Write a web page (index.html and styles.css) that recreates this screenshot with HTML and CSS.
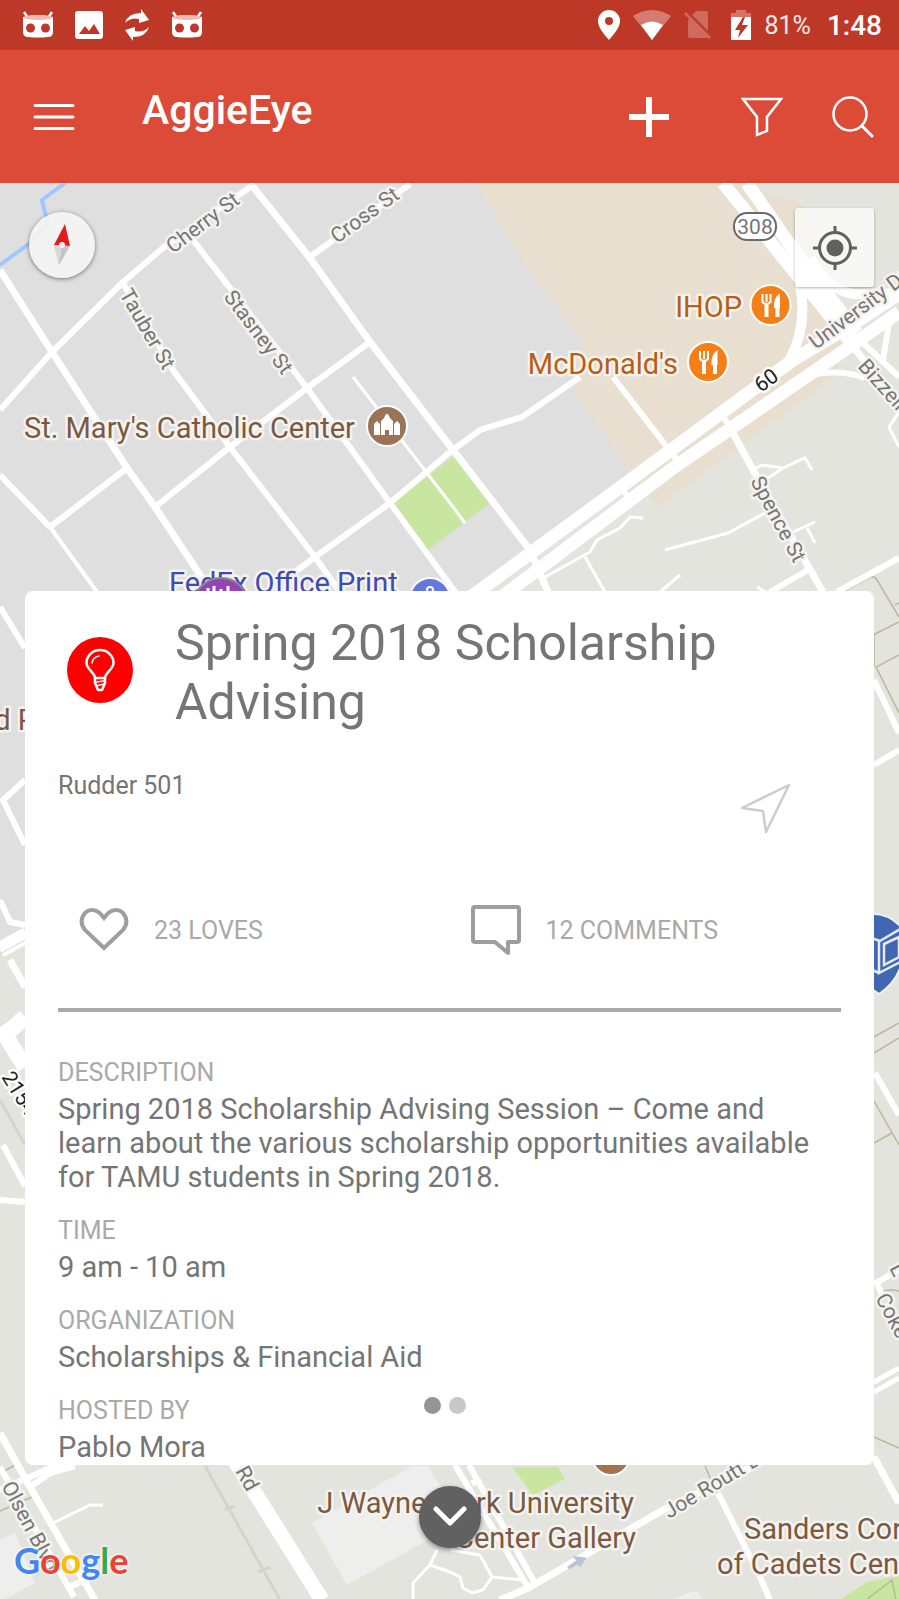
FILE: index.html
```html
<!DOCTYPE html>
<html lang="en">
<head>
  <meta charset="UTF-8" />
  <meta name="viewport" content="width=device-width, initial-scale=1.0"/>
  <title>AggieEye</title>
  <link rel="stylesheet" href="styles.css">
</head>
<body>
  <div class="status-bar">
    <svg width="32" height="30" viewBox="0 0 32 30">
      <path d="M2 2l4 6M30 2l-4 6" stroke="#fff" stroke-width="2.5"/>
      <path d="M1 7q15-4 30 0v15q0 5-5 5q-10 1-20 0q-5 0-5-5z" fill="#fff"/>
      <ellipse cx="16" cy="7.500" rx="14" ry="2.500" fill="#f0b9b2"/>
      <circle cx="8.500" cy="18" r="4.500" fill="#be3827"/>
      <circle cx="23.500" cy="18" r="4.500" fill="#be3827"/>
    </svg>
    <svg width="28" height="28" viewBox="0 0 28 28">
      <rect width="28" height="28" rx="3" fill="#fff"/>
      <path d="M4 23l6-8 4 5 5-7 6 10z" fill="#be3827"/>
    </svg>
    <svg width="26" height="32" viewBox="0 0 26 32">
      <path d="M1 14Q4 4 17 4V0l8 11-10 3v-4Q7 8 1 14z" fill="#fff"/>
      <path d="M25 18Q22 28 9 28v4L1 21l10-3v4q8 2 14-4z" fill="#fff"/>
    </svg>
    <svg width="32" height="30" viewBox="0 0 32 30">
      <path d="M2 2l4 6M30 2l-4 6" stroke="#fff" stroke-width="2.5"/>
      <path d="M1 7q15-4 30 0v15q0 5-5 5q-10 1-20 0q-5 0-5-5z" fill="#fff"/>
      <ellipse cx="16" cy="7.500" rx="14" ry="2.500" fill="#f0b9b2"/>
      <circle cx="8.500" cy="18" r="4.500" fill="#be3827"/>
      <circle cx="23.500" cy="18" r="4.500" fill="#be3827"/>
    </svg>
    <div class="status-right">
      <svg width="22" height="30" viewBox="0 0 22 30">
        <path fill-rule="evenodd" d="M11 0a11 11 0 0 1 11 11c0 7-7 14-11 19C7 25 0 18 0 11A11 11 0 0 1 11 0zm0 7a4 4 0 1 0 0 8 4 4 0 0 0 0-8z" fill="#fff"/>
      </svg>
      <svg width="38" height="30" viewBox="0 0 38 30">
        <path d="M0 6q19-12 38 0L19 30z" fill="#d57b70"/>
        <path d="M8 15q11-7 22 0L19 30z" fill="#fff"/>
      </svg>
      <svg width="28" height="30" viewBox="0 0 28 30">
        <path d="M5 8l7-7h10q2 0 2 2v23q0 2-2 2H6q-2 0-2-2V11z" fill="#cf6a5e"/>
        <path d="M2 1l26 26" stroke="#be3827" stroke-width="3"/>
        <path d="M1 3l25 25" stroke="#cf6a5e" stroke-width="2.500"/>
      </svg>
      <svg class="battery" width="20" height="30" viewBox="0 0 20 30">
        <path d="M0 8V3h5V0h10v3h5v5z" fill="#d57368"/>
        <path d="M0 7h20v23H0z" fill="#fff"/>
        <path d="M12 7L4 20h5l-2 8 10-13h-6l3-8z" fill="#be3827"/>
      </svg>
      <span class="percent">81%</span>
      <span class="clock">1:48</span>
    </div>
  </div>

  <header class="app-bar">
    <button class="icon-btn" aria-label="Menu">
      <svg width="42" height="42" viewBox="0 0 42 42" stroke="#fff" stroke-width="3" stroke-linecap="round">
        <path d="M2 9.500h38M2 21h38M2 32.500h38"/>
      </svg>
    </button>
    <h1>AggieEye</h1>
    <div class="actions">
      <button class="icon-btn" aria-label="Add">
        <svg width="40" height="42" viewBox="0 0 40 42" stroke="#fff" stroke-width="6">
          <path d="M0 21h40M20 1v40"/>
        </svg>
      </button>
      <button class="icon-btn filter" aria-label="Filter">
        <svg width="42" height="42" viewBox="0 0 42 42" fill="none" stroke="#fff" stroke-width="2.500">
          <path d="M2 3h38L26 21v14l-10 4V21z"/>
        </svg>
      </button>
      <button class="icon-btn" aria-label="Search">
        <svg width="42" height="42" viewBox="0 0 42 42" fill="none" stroke="#fff" stroke-width="2.500" stroke-linecap="round">
          <circle cx="18" cy="18" r="16.500"/>
          <path d="M30 30l10 10" stroke-width="3"/>
        </svg>
      </button>
    </div>
  </header>

  <main class="map-area">
    <svg class="map" viewBox="0 183 899 1416" preserveAspectRatio="xMidYMin slice">
      <rect y="183" width="899" height="1417" fill="#e3e4de"/>
      <path d="M0 183h740l120 147L470 600 30 925 0 950z" fill="#dfdfdf"/>
      <path d="M475 183h260l65 20 50 127-15 47-178 131-25-35-62-86 13-44-61-83z" fill="#e8dfd0"/>
      <path d="M394 503l61-48 35 48-62 47z" fill="#c8e6a0"/>
      <path d="M512 1467h46l7 12-32 16zM840 1600l27-18 32-6v24z" fill="#c8e6a0"/>
      <path d="M312 1523l100-57h16l34 55-115 64zM0 1540l15-8 20 51-32 17H0zM670 1600l27-10 6 10z" fill="#eeeeed"/>
      <path d="M65 183L42 200l6 25-18 18-30 22" fill="none" stroke="#9fc8ff" stroke-width="4"/>

      <!-- footpaths -->
      <g fill="none" stroke="#bbb798" stroke-width="1.500">
        <path d="M843 592l27-15q5-1 7 3l22 37M899 622l-30 15M895 605l4-2M899 655l-23 12 23 46M874 633V667"/>
        <path d="M874 1037l25-14M874 1053l25-15M874 1101l25 44M874 1143l18-10M883 1291q8-2 16 0M874 1437l25 11"/>
        <path d="M705 1466l13 30M0 1511l32-14M3 1472l12-7M866 1600l26-20 4 20"/>
      </g>
      <path d="M205 1466l75 134M225 1510l10-4M258 1572l12-5M0 1100l25 45" fill="none" stroke="#d3d4cf" stroke-width="3"/>

      <!-- minor roads -->
      <g fill="none" stroke="#fff" stroke-width="3">
        <path d="M353 377l97 126 15 20M753 470l9-5 21 3 22-10 7 12M768 478l15-10M765 513l-37 20-63 17"/>
        <path d="M793 532l22-10M807 528l8 15M643 518l-13-1-10 11-23 12-7 12-47 26M585 557l20 35M680 575l-20 17"/>
        <path d="M53 1523l37-18h13M437 1550l-7 15-17 18v17M430 1565l20 7 10 5 3 11 9 5 11-3 9-13-12-22M492 1577l30 3M480 1555l-30-5"/>
        <path d="M899 412l-10 15 10 20M757 587l10 6"/>
      </g>
      <g fill="none" stroke="#fff" stroke-width="6">
        <path d="M253 185l-90 63-41 35-70 69-52 58M310 257l100-73M123 283l50 87 57 77 85 110 27 38"/>
        <path d="M193 240l114 148 83 115 66 90M370 342l-63 46-77 59-75 60M127 468l-77 59"/>
        <path d="M0 475l50 52M580 377l-58 40-42 13-30 22-60 51-75 54-20 15"/>
        <path d="M50 527l47 65" stroke-width="4"/>
        <path d="M613 377l64 83M723 417l12 16M623 490l8 11M808 570l-38 22M899 558l-62 34"/>
        <path d="M860 340l39 37M890 317l-7 43M810 375q30-6 55 3"/>
        <path d="M0 607l25 41M25 780L3 800l22 45M0 900l10 22 15 3M3 1145l22 41M0 1200l25 2"/>
        <path d="M874 680l25 53M899 750l-25 15M875 1073l24 42M874 1284l25-14M876 1281l6 14"/>
        <path d="M874 1382l25-14M874 1392l25-14" stroke-width="5"/>
        <path d="M0 1467l74 130M0 1490l50-22 25-5M30 1487l20-14 25-7M70 1587l16-8M455 1465l74 124M469 1465l67 120M472 1484l8-6"/>
        <path d="M718 1493l42 84 10 23"/>
      </g>
      <g fill="none" stroke="#fff" stroke-width="7">
        <path d="M250 183l60 75 60 84 83 108 77 100 18 42M0 270l52 82 75 116 28 39 55 83"/>
        <path d="M733 433l20 37 70 122M850 343l49 60M10 960l15 27M0 1433l30 54 65 113M874 1457l25 46"/>
        <path d="M760 1463l-97 47-135 78-28 12"/>
      </g>
      <g fill="none" stroke="#fff">
        <path d="M470 597l13-9 184-135 126-93 57-34 49-32M494 602l13-9 170-128 56-38 122-84 44-31" stroke-width="13"/>
        <path d="M723 183l127 158M747 183l43 62 67 88" stroke-width="13"/>
        <path d="M810 258q20 34 45 36l44-1M800 285q8 40-10 74" stroke-width="10"/>
        <path d="M0 950l27-15M0 1027l25 40M5 1035l20-18" stroke-width="16"/>
        <path d="M235 1461l87 139" stroke-width="15"/>
        <path d="M0 954l25-14" stroke="#d3d4cf" stroke-width="1"/>
      </g>
      <path d="M568 1568l10-7-2-3 8 1-4 6-2-2z" stroke="#b9c3d3" stroke-width="3" fill="#b9c3d3"/>

      <!-- street names -->
      <g class="street">
        <text transform="translate(173 254) rotate(-37)">Cherry St</text>
        <text transform="translate(337 244) rotate(-36)">Cross St</text>
        <text transform="translate(119 294) rotate(60)">Tauber St</text>
        <text transform="translate(223 297) rotate(53)">Stasney St</text>
        <text transform="translate(750 481) rotate(62)">Spence St</text>
        <text transform="translate(857 367) rotate(48)">Bizzell St</text>
        <text transform="translate(816 350) rotate(-37)">University Dr</text>
        <text transform="translate(669 1519) rotate(-31)">Joe Routt Blvd</text>
        <text transform="translate(1 1486) rotate(62)">Olsen Blvd</text>
        <text transform="translate(235 1471) rotate(61)">Rd</text>
        <text transform="translate(875 1298) rotate(62)">Coke St</text>
        <text transform="translate(889 1268) rotate(62)">L</text>
        <text class="route" transform="translate(761 393) rotate(-37)">60</text>
        <text class="route" transform="translate(1 1077) rotate(58)">2154</text>
      </g>
      <rect x="734" y="213" width="42" height="27" rx="13" fill="#fff" stroke="#6b6b6b" stroke-width="2"/>
      <text class="shield" x="755" y="234" text-anchor="middle">308</text>

      <!-- places -->
      <g class="place">
        <text x="24" y="438">St. Mary's Catholic Center</text>
        <text x="36" y="730" text-anchor="end">Broad P</text>
        <text x="634" y="1513" text-anchor="end">J Wayne Stark University</text>
        <text x="636" y="1548" text-anchor="end">Center Gallery</text>
        <text x="744" y="1539">Sanders Corps</text>
        <text x="717" y="1574">of Cadets Center</text>
        <text class="food" x="742" y="317" text-anchor="end">IHOP</text>
        <text class="food" x="678" y="374" text-anchor="end">McDonald's</text>
        <text class="shop" x="169" y="593">FedEx Office Print</text>
      </g>
      <g stroke="#fff" stroke-width="2">
        <circle cx="387" cy="426" r="20" fill="#9b7357"/>
        <circle cx="611" cy="1456" r="19" fill="#a5714f"/>
        <circle cx="770.500" cy="305" r="20" fill="#f57f17"/>
        <circle cx="708" cy="362" r="20" fill="#f57f17"/>
        <circle cx="430" cy="598" r="20" fill="#6478e0"/>
        <circle cx="221" cy="606" r="28" fill="#9444b5" stroke="#888"/>
      </g>
      <path d="M374 435V424l3-3 3 3v11zM394 435V424l3-3 3 3v11zM381 435v-14l3-3 2-4h2l2 4 3 3v14h-4v-5h-4v5z" fill="#fff"/>
      <g id="fork" fill="none" stroke="#fff">
        <path d="M762.500 294v8q4 4 8 0v-8M766.500 294v8" stroke-width="2"/>
        <path d="M766.500 303v14M777.500 303v14" stroke-width="4"/>
        <path d="M780 293q-7 5-6 15h6z" fill="#fff" stroke="none"/>
      </g>
      <use href="#fork" x="-62.500" y="57"/>
      <path d="M208 588v6M214 586v8M221 589v5M228 586v8" stroke="#fff" stroke-width="3"/>
      <circle cx="430" cy="590" r="3" fill="none" stroke="#fff" stroke-width="2"/>
      <path d="M868 914q20-2 34 14v34q-5 20-23 32l-11-8z" fill="#4267b2" stroke="#eef1f8" stroke-width="2"/>
      <path d="M868 937l12 4 22-13M879 941v32l23-12M868 968l11 5M884 944l15-7v20l-15 8z" fill="none" stroke="#e4ebf6" stroke-width="2.500"/>
    </svg>

    <div class="map-controls">
      <button class="compass" aria-label="Compass">
        <svg width="66" height="66" viewBox="0 0 66 66">
          <path d="M36 12l5 22-16-1z" fill="#e21b1b"/>
          <path d="M25 33l5 20 11-19z" fill="#c4c4c4"/>
          <path d="M25 33l5 20 3-20z" fill="#d8d8d8"/>
          <circle cx="33" cy="33" r="3" fill="#f2f2f2"/>
        </svg>
      </button>
      <button class="locate" aria-label="My location">
        <svg width="44" height="44" viewBox="0 0 44 44" fill="none" stroke="#616161" stroke-width="3">
          <circle cx="22" cy="22" r="15.500"/>
          <circle cx="22" cy="22" r="8.500" fill="#616161" stroke="none"/>
          <path d="M22 0v7M22 37v7M0 22h7M37 22h7"/>
        </svg>
      </button>
    </div>

    <article class="card">
      <div class="card-header">
        <svg class="event-icon" width="66" height="66" viewBox="0 0 66 66">
          <circle cx="33" cy="33" r="33" fill="#f00"/>
          <g fill="none" stroke="#fff" stroke-width="2.500" stroke-linecap="round" stroke-linejoin="round">
            <path d="M28 41c0-5-8.500-9-8.500-15a13.500 13 0 0 1 27 0c0 6-8.500 10-8.500 15z"/>
            <path d="M28 41v5l3 7h4l3-7v-5"/>
            <path d="M29 45l8-1M29 49l8-2M25 26q1-6 7-7" stroke-width="1.500"/>
          </g>
        </svg>
        <h2>Spring 2018 Scholarship Advising</h2>
      </div>

      <div class="location">
        <p>Rudder 501</p>
        <button class="icon-btn navigate" aria-label="Navigate">
          <svg width="50" height="50" viewBox="0 0 50 50" fill="none" stroke="#ccc" stroke-width="2.500" stroke-linejoin="round">
            <path d="M48 2L1 25l21 3 3 21z"/>
          </svg>
        </button>
      </div>

      <div class="stats">
        <button class="stat">
          <svg width="50" height="50" viewBox="0 0 50 50" fill="none" stroke="#9e9e9e" stroke-width="4">
            <path d="M25 43L6 25C-2 15 6 5 13 5c6 0 9 4 12 8 3-4 6-8 12-8 7 0 15 10 7 20z"/>
          </svg>
          23 LOVES
        </button>
        <button class="stat">
          <svg width="50" height="50" viewBox="0 0 50 50" fill="none" stroke="#9e9e9e" stroke-width="4" stroke-linejoin="round">
            <path d="M4 2h42q2 0 2 2v31q0 2-2 2h-9v11L24 37H4q-2 0-2-2V4q0-2 2-2z"/>
          </svg>
          12 COMMENTS
        </button>
      </div>

      <dl class="details">
        <dt>DESCRIPTION</dt>
        <dd>Spring 2018 Scholarship Advising Session – Come and learn about the various scholarship opportunities available for TAMU students in Spring 2018.</dd>
        <dt>TIME</dt>
        <dd>9 am - 10 am</dd>
        <dt>ORGANIZATION</dt>
        <dd>Scholarships &amp; Financial Aid</dd>
        <dt>HOSTED BY</dt>
        <dd>Pablo Mora</dd>
      </dl>

      <div class="dots">
        <span class="dot active"></span>
        <span class="dot"></span>
      </div>
    </article>

    <div class="map-footer">
      <a class="google" href="#"><span class="blue">G</span><span class="red">o</span><span class="yellow">o</span><span class="blue">g</span><span class="green">l</span><span class="red">e</span></a>
      <button class="collapse" aria-label="Collapse">
        <svg width="34" height="22" viewBox="0 0 34 22" fill="none" stroke="#fff" stroke-width="5" stroke-linecap="round" stroke-linejoin="round">
          <path d="M3 3l14 14L31 3"/>
        </svg>
      </button>
    </div>
  </main>
</body>
</html>
```
FILE: styles.css
```css
* {
  box-sizing: border-box;
  font-family: Roboto, sans-serif;
}
body {
  margin: 0;
  min-height: 100vh;
  display: flex;
  flex-direction: column;
  background: #e3e4de;
  color: #757575;
}
h1, h2, p, dl, dd {
  margin: 0;
  font-weight: 400;
}
button {
  padding: 0;
  border: none;
  background: none;
  color: inherit;
  cursor: pointer;
}
svg {
  display: block;
  flex: none;
}

/* status bar */
.status-bar {
  display: flex;
  align-items: center;
  gap: 21px;
  height: 50px;
  padding: 0 17px 0 22px;
  background: #be3827;
  color: #fff;
}
.status-right {
  display: flex;
  align-items: center;
  gap: 13px;
  margin-left: auto;
}
.battery {
  margin-left: 6px;
}
.percent {
  font-size: 25px;
  color: #fbe9e7;
}
.clock {
  font-size: 28px;
  font-weight: 500;
  margin-left: 3px;
}

/* app bar */
.app-bar {
  display: flex;
  align-items: center;
  height: 133px;
  padding: 0 25px 0 33px;
  background: #dc4b38;
  color: #fff;
}
.app-bar h1 {
  margin-left: 67px;
  padding-bottom: 14px;
  font-size: 41px;
  font-weight: 500;
}
.actions {
  display: flex;
  align-items: center;
  margin-left: auto;
}
.filter {
  margin: 0 49px 0 72px;
}

/* map */
.map-area {
  position: relative;
  flex: 1;
  display: flex;
  flex-direction: column;
  overflow: hidden;
}
.map {
  position: absolute;
  top: 0;
  left: 0;
  width: 100%;
  height: 100%;
}
.street text, .shield {
  font-size: 21px;
  fill: #757575;
}
.street text, .place text {
  paint-order: stroke;
  stroke: #f5f3f0;
  stroke-width: 5px;
  stroke-linejoin: round;
}
.street .route {
  fill: #222;
  stroke: #fff;
}
.place text {
  font-size: 29px;
  fill: #795a40;
}
.place .food {
  fill: #b85f14;
}
.place .shop {
  fill: #3f4ab5;
}
.map-controls {
  position: relative;
  display: flex;
  justify-content: space-between;
  align-items: flex-start;
  padding: 25px 25px 0 29px;
  height: 408px;
}
.compass {
  margin-top: 4px;
  border-radius: 50%;
  background: rgba(245, 245, 245, 0.9);
  box-shadow: 0 1px 4px rgba(0,0,0,0.5);
}
.locate {
  display: grid;
  place-items: center;
  width: 79px;
  height: 79px;
  border-radius: 3px;
  background: rgba(255,255,255,0.7);
  box-shadow: 0 1px 3px rgba(0,0,0,0.3);
}

/* event card */
.card {
  position: relative;
  margin: 0 25px;
  padding: 23px 33px 1px;
  background: #fff;
  border-radius: 8px;
}
.card-header {
  display: flex;
  align-items: center;
  gap: 42px;
  padding-left: 9px;
}
.card-header h2 {
  font-size: 50px;
  line-height: 59px;
}
.event-icon {
  margin-bottom: 6px;
}
.location {
  display: flex;
  justify-content: space-between;
  align-items: flex-start;
  margin-top: 39px;
  padding-right: 50px;
}
.location p {
  font-size: 25px;
  line-height: 29px;
}
.navigate {
  margin-top: 12px;
}
.stats {
  display: grid;
  grid-template-columns: 1fr 1fr;
  padding: 72px 0 53px;
  border-bottom: 4px solid #a9a9a9;
}
.stat {
  display: flex;
  align-items: center;
  gap: 25px;
  padding-left: 21px;
  font-size: 25px;
  color: #a9a9a9;
}
.details {
  padding-top: 46px;
}
.details dt {
  margin-bottom: 5px;
  font-size: 25px;
  line-height: 29px;
  color: #a9a9a9;
}
.details dd {
  margin-bottom: 22px;
  padding-right: 20px;
  font-size: 29px;
  line-height: 34px;
}
.details dd:last-child {
  margin-bottom: 0;
}
.dots {
  position: absolute;
  left: 0;
  right: 10px;
  bottom: 51px;
  display: flex;
  justify-content: center;
  gap: 8px;
}
.dot {
  width: 17px;
  height: 17px;
  border-radius: 50%;
  background: #c8c8c8;
}
.dot.active {
  background: #959595;
}

.map-footer {
  position: relative;
  height: 133px;
  padding-top: 21px;
}
.collapse {
  display: grid;
  place-items: center;
  width: 62px;
  height: 62px;
  margin: 0 auto;
  border-radius: 50%;
  background: #616161;
  box-shadow: 0 2px 5px rgba(0,0,0,0.4);
}
.google {
  position: absolute;
  left: 14px;
  bottom: 16px;
  font-family: Lato, sans-serif;
  font-size: 36px;
  line-height: 44px;
  font-weight: 700;
  text-decoration: none;
  text-shadow: 0 0 3px #fff, 0 0 3px #fff;
}
.google span {
  font-family: inherit;
}
.blue {
  color: #4285f4;
}
.red {
  color: #ea4335;
}
.yellow {
  color: #fbbc05;
}
.green {
  color: #34a853;
}
```
